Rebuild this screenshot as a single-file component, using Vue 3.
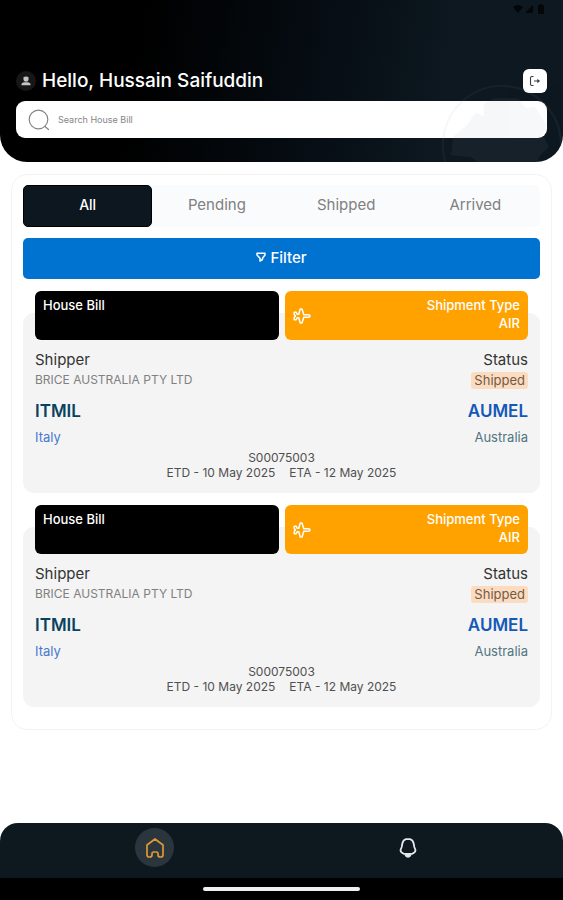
<script setup>
import { ref } from 'vue'

const query = ref('')
const tabs = ['All', 'Pending', 'Shipped', 'Arrived']
const active = ref('All')

const shipment = {
  type: 'AIR',
  shipper: 'BRICE AUSTRALIA PTY LTD',
  status: 'Shipped',
  from: { code: 'ITMIL', country: 'Italy' },
  to: { code: 'AUMEL', country: 'Australia' },
  number: 'S00075003',
  etd: '10 May 2025',
  eta: '12 May 2025'
}
const shipments = [
  { id: 1, ...shipment },
  { id: 2, ...shipment }
]
</script>

<template>
  <div class="page">
    <header class="header">
      <svg class="globe" viewBox="0 0 120 120" aria-hidden="true">
        <circle cx="60" cy="60" r="58" fill="none" stroke="#8a99a5" stroke-width="2" />
        <path d="M12 52 L26 40 L34 28 L42 32 L42 20 L52 14 H76 L84 24 L92 22 L104 40 L100 50 L106 62 L96 72 L90 100 L70 112 L50 108 L44 84 L30 72 L10 70 Z" fill="#8a99a5" />
      </svg>
      <div class="status-icons" aria-hidden="true">
        <svg viewBox="0 0 34 12">
          <path d="M0 4 Q5 0 10 4 L5 10 Z M12 10 L20 2 V10 Z M25 2 H27 V1 H29 V2 H31 V11 H25 Z" fill="#03070a" />
        </svg>
      </div>
      <div class="greeting">
        <span class="avatar">
          <svg viewBox="0 0 18 18" aria-hidden="true">
            <path d="M6.500 5 Q9 4 11.500 5 V8 Q11 9.800 9 9.800 Q7 9.800 6.500 8 Z M4.500 13.300 V11.800 Q5.500 10.300 7 10.200 H11 Q12.500 10.300 13.500 11.800 V13.300 Z" fill="#c4c4c4" />
          </svg>
        </span>
        <h1>Hello, Hussain Saifuddin</h1>
        <button class="logout" type="button" aria-label="Log out">
          <svg viewBox="0 0 12 12" fill="none" stroke="#3c3c3c" stroke-width="1.1" aria-hidden="true">
            <path d="M4.500 1.500 H3 Q1.500 1.500 1.500 3 V9 Q1.500 10.500 3 10.500 H4.500 M5 6 H10.500" />
            <path d="M8.300 3.800 L10.800 6 L8.300 8.200 Z" fill="#3c3c3c" stroke="none" />
          </svg>
        </button>
      </div>
      <label class="search">
        <svg viewBox="0 0 22 22" fill="none" stroke="#858585" stroke-width="1.2" stroke-linecap="round" aria-hidden="true">
          <circle cx="10.500" cy="10.500" r="9.300" />
          <path d="M17 17.500 L20.500 20.500" />
        </svg>
        <input v-model="query" type="text" placeholder="Search House Bill" aria-label="Search House Bill" />
      </label>
    </header>

    <main class="panel">
      <div class="tabs">
        <button
          v-for="tab in tabs"
          :key="tab"
          type="button"
          class="tab"
          :class="{ active: tab === active }"
          @click="active = tab"
        >{{ tab }}</button>
      </div>

      <button class="filter" type="button">
        <svg viewBox="0 0 10 10" fill="none" stroke="#fff" stroke-width="1.5" stroke-linejoin="round" aria-hidden="true">
          <path d="M1 1.200 H9 V3 L6.500 6.200 V7.500 L4 9 V6.200 L1 3 Z" />
        </svg>
        Filter
      </button>

      <article v-for="item in shipments" :key="item.id" class="card">
        <div class="banners">
          <div class="banner bill">House Bill</div>
          <div class="banner type">
            <svg viewBox="0 0 18 18" fill="none" stroke="#fff" stroke-width="1.5" stroke-linejoin="round" aria-hidden="true">
              <path d="M17 9 Q17 7.800 15.500 7.800 H10.800 L9 2 H7.200 L5.800 7.300 H4.300 L3.200 5.300 H1.200 V7.500 L2.500 9 L1.200 10.500 V12.700 H3.200 L4.300 10.700 H5.800 L7.200 16 H9 L10.800 10.200 H15.500 Q17 10.200 17 9 Z" />
            </svg>
            <div class="type-text">Shipment Type<br />{{ item.type }}</div>
          </div>
        </div>
        <div class="details">
          <div class="row label"><span>Shipper</span><span>Status</span></div>
          <div class="row value">
            <span>{{ item.shipper }}</span><span class="pill">{{ item.status }}</span>
          </div>
          <div class="row code">
            <span class="origin">{{ item.from.code }}</span><span class="dest">{{ item.to.code }}</span>
          </div>
          <div class="row country">
            <span class="origin">{{ item.from.country }}</span><span class="dest">{{ item.to.country }}</span>
          </div>
          <div class="dates">{{ item.number }}</div>
          <div class="dates"><span>ETD - {{ item.etd }}</span><span>ETA - {{ item.eta }}</span></div>
        </div>
      </article>
    </main>

    <nav class="nav">
      <a class="nav-item current" href="#home" aria-label="Home">
        <svg viewBox="0 0 20 20" fill="none" stroke="#dc9a35" stroke-width="1.7" stroke-linejoin="round" aria-hidden="true">
          <path d="M2 7 L10 1 L18 7 V16.500 Q18 19 16 19 H15.500 Q13 19 13 17 V16 Q13 14 11.500 14 H8.500 Q7 14 7 16 V17 Q7 19 4.500 19 H4 Q2 19 2 16.500 Z" />
        </svg>
      </a>
      <a class="nav-item" href="#notifications" aria-label="Notifications">
        <svg viewBox="0 0 20 20" fill="none" stroke="#e4e6e8" stroke-width="1.8" stroke-linejoin="round" aria-hidden="true">
          <path d="M8 1.200 H12 Q15 2 15.800 6 L16.300 9 L17.500 12 Q17.500 14.500 14 15.800 H6 Q2.500 14.500 2.500 12 L3.700 9 L4.200 6 Q5 2 8 1.200 Z" />
          <path d="M7.500 17 Q8 18.800 10 18.800 Q12 18.800 12.500 17 Z" />
        </svg>
      </a>
    </nav>
    <div class="home-bar"><span></span></div>
  </div>
</template>

<style>
body {
  margin: 0;
  background: #fff;
}
</style>

<style scoped>
.page {
  min-height: 100vh;
  display: flex;
  flex-direction: column;
  font-family: Inter, "Open Sans", sans-serif;
  color: #333;
}
.page * {
  box-sizing: border-box;
}
button,
input {
  font: inherit;
  border: 0;
  padding: 0;
  margin: 0;
}
svg {
  display: block;
  flex: none;
}
.header {
  position: relative;
  overflow: hidden;
  padding: 3px 16px 24px;
  border-radius: 0 0 27px 27px;
  background: linear-gradient(100deg, #000 25%, #050b11 52%, #0d1820 78%);
}
.globe {
  position: absolute;
  right: 0;
  top: 84px;
  width: 122px;
  height: 122px;
  opacity: 0.07;
  z-index: 2;
  pointer-events: none;
}
.status-icons {
  display: flex;
  justify-content: flex-end;
  height: 66px;
}
.status-icons svg {
  width: 34px;
  height: 12px;
}
.greeting {
  display: flex;
  align-items: center;
  height: 24px;
  gap: 6px;
}
.avatar {
  width: 20px;
  height: 20px;
  border-radius: 50%;
  background: #171717;
  display: grid;
  place-items: center;
}
.avatar svg {
  width: 18px;
  height: 18px;
}
h1 {
  flex: 1;
  margin: 0;
  font-size: 19px;
  line-height: 24px;
  font-weight: 500;
  color: #fff;
  white-space: nowrap;
}
.logout {
  width: 24px;
  height: 24px;
  border-radius: 6px;
  background: #fff;
  display: grid;
  place-items: center;
}
.logout svg {
  width: 12px;
  height: 12px;
}
.search {
  display: flex;
  align-items: center;
  gap: 8px;
  height: 37px;
  margin-top: 8px;
  padding: 0 12px;
  border-radius: 9px;
  background: #fff;
}
.search svg {
  width: 22px;
  height: 22px;
}
.search input {
  flex: 1;
  min-width: 0;
  height: 24px;
  outline: 0;
  background: transparent;
  font-size: 9px;
  color: #333;
}
.search input::placeholder {
  color: #858585;
  opacity: 1;
}
.panel {
  margin: 12px 11px;
  padding: 10px 11px 22px;
  border: 1px solid #f3f3f3;
  border-radius: 16px;
}
.tabs {
  display: grid;
  grid-template-columns: repeat(4, 1fr);
  height: 42px;
  border-radius: 5px;
  background: #fafbfc;
}
.tab {
  padding-bottom: 3px;
  border-radius: 5px;
  background: transparent;
  color: #808080;
  font-size: 15px;
}
.tab.active {
  background: #0d171f;
  border: 1px solid #000;
  color: #fff;
  font-size: 14px;
  font-weight: 500;
}
.filter {
  display: flex;
  align-items: center;
  justify-content: center;
  gap: 4px;
  width: 100%;
  height: 41px;
  margin-top: 11px;
  padding-bottom: 3px;
  border-radius: 5px;
  background: #0073d1;
  color: #fff;
  font-size: 15px;
  font-weight: 500;
}
.filter svg {
  width: 10px;
  height: 10px;
}
.card {
  margin-top: 12px;
}
.banners {
  position: relative;
  display: grid;
  grid-template-columns: 1fr 1fr;
  gap: 6px;
  margin: 0 12px;
}
.banner {
  height: 49px;
  padding: 5px 8px;
  border-radius: 6px;
  color: #fff;
  font-size: 13px;
  line-height: 18px;
  font-weight: 500;
}
.bill {
  background: #000;
}
.type {
  display: flex;
  align-items: center;
  justify-content: space-between;
  background: #ffa200;
}
.type svg {
  width: 18px;
  height: 18px;
}
.type-text {
  align-self: flex-start;
  text-align: right;
}
.details {
  margin-top: -27px;
  padding: 36px 12px 13px;
  border-radius: 11px;
  background: #f4f4f4;
}
.row {
  display: flex;
  align-items: center;
  justify-content: space-between;
  height: 20px;
}
.label {
  font-size: 15px;
}
.value {
  font-size: 12px;
  color: #808080;
}
.pill {
  margin-top: 3px;
  padding: 0 3px;
  border-radius: 3px;
  background: #fbdcc0;
  color: #765a45;
  font-size: 13px;
  line-height: 17px;
}
.code {
  height: 24px;
  margin-top: 10px;
  font-size: 17px;
  font-weight: 600;
}
.code .origin {
  color: #084260;
}
.code .dest {
  color: #1459b8;
}
.country {
  margin-top: 4px;
  margin-bottom: 3px;
  font-size: 13px;
}
.country .origin {
  color: #4878d0;
}
.country .dest {
  color: #527480;
}
.dates {
  display: flex;
  justify-content: center;
  gap: 14px;
  font-size: 12px;
  line-height: 15px;
  color: #505050;
}
.nav {
  display: grid;
  grid-template-columns: 1fr 1fr;
  justify-items: center;
  height: 55px;
  margin-top: auto;
  padding: 5px 28px 0;
  border-radius: 18px 18px 0 0;
  background: #0d181f;
}
.nav-item {
  display: grid;
  place-items: center;
  width: 39px;
  height: 39px;
  border-radius: 50%;
}
.current {
  background: #2b353d;
}
.nav-item svg {
  width: 20px;
  height: 20px;
}
.home-bar {
  display: flex;
  justify-content: center;
  height: 22px;
  padding-top: 9px;
  background: #000;
}
.home-bar span {
  width: 28%;
  height: 4px;
  border-radius: 2px;
  background: #f0f0f0;
}
</style>
